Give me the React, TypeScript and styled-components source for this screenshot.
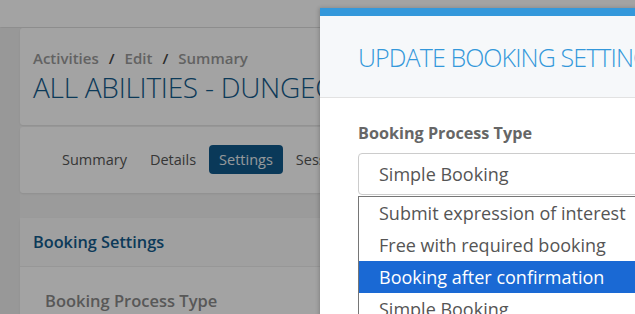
import React from "react";
import styled, { createGlobalStyle } from "styled-components";

const GlobalStyle = createGlobalStyle`
  html, body {
    margin: 0;
    padding: 0;
    background: #f2f2f2;
    font-family: "Open Sans", "Liberation Sans", sans-serif;
  }
`;

const Page = styled.div`
  position: relative;
  width: 635px;
  height: 314px;
  overflow: hidden;
  background: #f2f2f2;
`;

const TopBar = styled.header`
  height: 27px;
  background: #fff;
  box-shadow: 0 1px 2px rgba(0, 0, 0, 0.12);
`;

const Main = styled.div`
  display: flex;
  margin-top: 1px;
`;

const Sidebar = styled.aside`
  width: 20px;
  flex: none;
  height: 290px;
  background: #eeeeee;
`;

const Content = styled.main`
  flex: 1;
  display: flex;
  flex-direction: column;
`;

const Card = styled.section<{ $gap?: number }>`
  background: #fff;
  margin-top: ${({ $gap }) => $gap ?? 0}px;
  border-radius: 3px 0 0 3px;
  box-shadow: 0 1px 2px rgba(0, 0, 0, 0.08);
`;

const HeaderCard = styled(Card)`
  height: 97px;
  padding: 20px 0 0 13px;
  box-sizing: border-box;
  white-space: nowrap;
  overflow: hidden;
`;

const Breadcrumb = styled.div`
  font-size: 15px;
  font-weight: 600;
  color: #9a9a9a;
  line-height: 20px;
`;

const Slash = styled.span`
  margin: 0 10px;
  color: #444;
`;

const Title = styled.h1`
  margin: 1px 0 0;
  font-size: 28px;
  font-weight: 300;
  color: #135b8c;
  line-height: 36px;
  letter-spacing: -0.25px;
`;

const TabsCard = styled(Card)`
  height: 66px;
  display: flex;
  align-items: flex-start;
  padding: 18px 0 0 32px;
  box-sizing: border-box;
  gap: 3px;
  white-space: nowrap;
  overflow: hidden;
`;

const Tab = styled.div<{ $active?: boolean }>`
  font-size: 14.5px;
  line-height: 29px;
  height: 29px;
  padding: 0 10px;
  border-radius: 4px;
  color: ${({ $active }) => ($active ? "#e8eef2" : "#555")};
  background: ${({ $active }) => ($active ? "#115a8c" : "transparent")};
`;

const SettingsCard = styled(Card)`
  height: 120px;
`;

const SettingsHeader = styled.div`
  height: 48px;
  padding-left: 13px;
  display: flex;
  align-items: center;
  font-size: 16.3px;
  font-weight: 600;
  color: #135b8c;
  border-bottom: 1px solid #ececec;
  background: #fafafa;
`;

const SettingsBody = styled.div`
  padding: 22px 0 0 25px;
  font-size: 16.5px;
  font-weight: 600;
  color: #8a8a8a;
`;

const Overlay = styled.div`
  position: absolute;
  inset: 0;
  background: rgba(0, 0, 0, 0.36);
`;

const Modal = styled.div`
  position: absolute;
  left: 320px;
  top: 8px;
  width: 420px;
  height: 340px;
  background: #fff;
  border-top: 8px solid #3498db;
  box-shadow: -1px 0 4px rgba(0, 0, 0, 0.2);
`;

const ModalHeader = styled.div`
  height: 82px;
  padding-left: 38px;
  display: flex;
  align-items: center;
  background: #f6f8fa;
  border-bottom: 1px solid #e2e2e2;
  box-sizing: border-box;
  white-space: nowrap;
`;

const ModalTitle = styled.h2`
  margin: 0;
  font-size: 25px;
  font-weight: 300;
  color: #3498db;
  letter-spacing: -0.9px;
`;

const ModalBody = styled.div`
  padding: 24px 0 0 38px;
`;

const Label = styled.div`
  font-size: 16.2px;
  font-weight: 700;
  color: #666;
  line-height: 22px;
`;

const Select = styled.div`
  margin-top: 9px;
  height: 42px;
  border: 1px solid #ccc;
  border-radius: 4px;
  box-sizing: border-box;
  padding-left: 20px;
  display: flex;
  align-items: center;
  font-size: 18px;
  color: #555;
`;

const OptionList = styled.ul`
  list-style: none;
  margin: 1px 0 0;
  padding: 0;
  border: 1px solid #767676;
  border-right: none;
  background: #fff;
`;

const Option = styled.li<{ $selected?: boolean }>`
  height: 32px;
  line-height: 32px;
  padding-left: 20px;
  font-size: 18px;
  white-space: nowrap;
  color: ${({ $selected }) => ($selected ? "#fff" : "#555")};
  background: ${({ $selected }) => ($selected ? "#1a69d4" : "transparent")};
`;

const tabs = ["Summary", "Details", "Settings", "Sessions"];
const options = [
  "Submit expression of interest",
  "Free with required booking",
  "Booking after confirmation",
  "Simple Booking",
];

export default function App() {
  return (
    <Page>
      <GlobalStyle />
      <TopBar />
      <Main>
        <Sidebar />
        <Content>
          <HeaderCard>
            <Breadcrumb>
              Activities<Slash>/</Slash>Edit<Slash>/</Slash>Summary
            </Breadcrumb>
            <Title>ALL ABILITIES - DUNGEON ADVENTURE</Title>
          </HeaderCard>
          <TabsCard $gap={2}>
            {tabs.map((t) => (
              <Tab key={t} $active={t === "Settings"}>
                {t}
              </Tab>
            ))}
          </TabsCard>
          <SettingsCard $gap={25}>
            <SettingsHeader>Booking Settings</SettingsHeader>
            <SettingsBody>Booking Process Type</SettingsBody>
          </SettingsCard>
        </Content>
      </Main>
      <Overlay />
      <Modal>
        <ModalHeader>
          <ModalTitle>UPDATE BOOKING SETTINGS</ModalTitle>
        </ModalHeader>
        <ModalBody>
          <Label>Booking Process Type</Label>
          <Select>Simple Booking</Select>
          <OptionList>
            {options.map((o) => (
              <Option key={o} $selected={o === "Booking after confirmation"}>
                {o}
              </Option>
            ))}
          </OptionList>
        </ModalBody>
      </Modal>
    </Page>
  );
}
